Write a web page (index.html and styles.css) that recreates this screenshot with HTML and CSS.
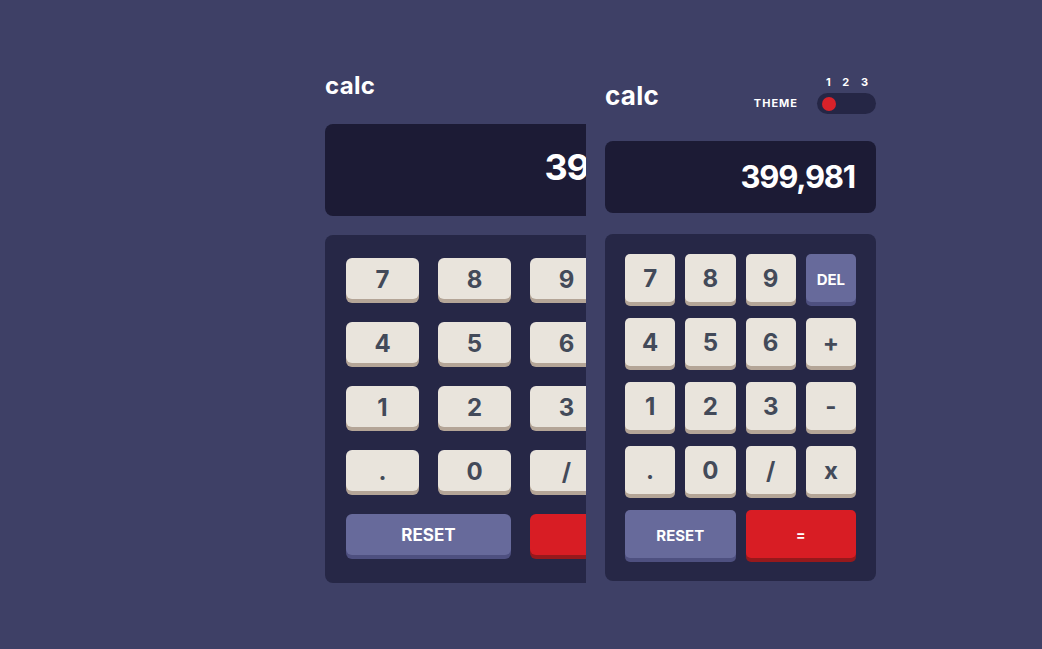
FILE: index.html
```html
<!DOCTYPE html>
<html lang="en">
<head>
<meta charset="utf-8">
<title>calc</title>
<link rel="stylesheet" href="styles.css">
</head>
<body>
<main class="stage">
  <section class="pane pane-left">
    <div class="calc calc-lg">
      <header class="calc-header">
        <h1 class="title">calc</h1>
        <div class="theme">
          <span class="theme-label">THEME</span>
          <div class="theme-switch">
            <div class="theme-nums"><span>1</span><span>2</span><span>3</span></div>
            <div class="toggle"><span class="knob"></span></div>
          </div>
        </div>
      </header>
      <div class="screen">399,981</div>
      <div class="keypad">
        <button class="key">7</button>
        <button class="key">8</button>
        <button class="key">9</button>
        <button class="key key-alt key-small">DEL</button>
        <button class="key">4</button>
        <button class="key">5</button>
        <button class="key">6</button>
        <button class="key">+</button>
        <button class="key">1</button>
        <button class="key">2</button>
        <button class="key">3</button>
        <button class="key">-</button>
        <button class="key">.</button>
        <button class="key">0</button>
        <button class="key">/</button>
        <button class="key">x</button>
        <button class="key key-alt key-wide key-small">RESET</button>
        <button class="key key-eq key-wide key-small">=</button>
      </div>
    </div>
  </section>
  <section class="pane pane-right">
    <div class="calc calc-sm">
      <header class="calc-header">
        <h1 class="title">calc</h1>
        <div class="theme">
          <span class="theme-label">THEME</span>
          <div class="theme-switch">
            <div class="theme-nums"><span>1</span><span>2</span><span>3</span></div>
            <div class="toggle"><span class="knob"></span></div>
          </div>
        </div>
      </header>
      <div class="screen">399,981</div>
      <div class="keypad">
        <button class="key">7</button>
        <button class="key">8</button>
        <button class="key">9</button>
        <button class="key key-alt key-small">DEL</button>
        <button class="key">4</button>
        <button class="key">5</button>
        <button class="key">6</button>
        <button class="key">+</button>
        <button class="key">1</button>
        <button class="key">2</button>
        <button class="key">3</button>
        <button class="key">-</button>
        <button class="key">.</button>
        <button class="key">0</button>
        <button class="key">/</button>
        <button class="key">x</button>
        <button class="key key-alt key-wide key-small">RESET</button>
        <button class="key key-eq key-wide key-small">=</button>
      </div>
    </div>
  </section>
</main>
</body>
</html>
```
FILE: styles.css
```css
* { box-sizing: border-box; }

html, body {
  margin: 0;
  padding: 0;
  background: #3e4066;
}

body {
  font-family: "Inter", "Noto Sans", sans-serif;
  color: #ffffff;
  overflow: hidden;
}

.stage {
  display: flex;
  width: 1042px;
  height: 649px;
}

.pane {
  height: 100%;
  overflow: hidden;
  background: #3e4066;
}

.pane-left {
  width: 586px;
  flex-shrink: 0;
  padding: 70px 0 0 325px;
}

.pane-right {
  flex: 1;
  padding: 74px 0 0 19px;
}

.calc { flex-shrink: 0; }

.calc-lg { width: 391px; }
.calc-sm { width: 271px; }

.calc-header {
  display: flex;
  justify-content: space-between;
  align-items: flex-end;
}

.title {
  margin: 0;
  font-weight: 700;
  line-height: 1;
  letter-spacing: 0.3px;
}

.calc-lg .calc-header { height: 32px; margin-bottom: 22px; }
.calc-lg .title { font-size: 24px; padding-bottom: 4px; }

.calc-sm .calc-header { height: 40px; margin-bottom: 27px; }
.calc-sm .title { font-size: 26px; padding-bottom: 5px; }

.theme {
  display: flex;
  align-items: flex-end;
  gap: 19px;
}

.theme-label {
  font-size: 11px;
  font-weight: 700;
  letter-spacing: 1px;
  line-height: 1;
  padding-bottom: 5px;
}

.theme-switch {
  display: flex;
  flex-direction: column;
  gap: 5px;
}

.theme-nums {
  display: flex;
  justify-content: space-between;
  padding: 0 8px 0 9px;
  font-size: 11px;
  font-weight: 700;
  line-height: 1;
}

.toggle {
  width: 59px;
  height: 21px;
  border-radius: 11px;
  background: #252645;
  display: flex;
  align-items: center;
  padding: 0 5px;
}

.knob {
  width: 14px;
  height: 14px;
  border-radius: 50%;
  background: #d8222a;
}

.screen {
  display: flex;
  align-items: center;
  justify-content: flex-end;
  background: #1c1b35;
  border-radius: 8px;
  font-weight: 700;
  line-height: 1;
}

.calc-lg .screen {
  height: 92px;
  padding: 0 37px 6px 0;
  font-size: 36px;
  letter-spacing: -1.2px;
  margin-bottom: 19px;
}

.calc-sm .screen {
  height: 72px;
  padding: 0 21px 2px 0;
  font-size: 31px;
  letter-spacing: -1.2px;
  margin-bottom: 21px;
}

.keypad {
  display: grid;
  grid-template-columns: repeat(4, 1fr);
  background: #262746;
  border-radius: 8px;
}

.calc-lg .keypad {
  padding: 23px 21px 28px;
  column-gap: 19px;
  row-gap: 23px;
}

.calc-sm .keypad {
  padding: 20px 20px 23px;
  column-gap: 10px;
  row-gap: 16px;
}

.key {
  border: 0;
  margin: 0;
  padding: 2px 0 0;
  font-family: inherit;
  font-weight: 700;
  color: #434a59;
  background: #e9e4dc;
  box-shadow: 0 4px 0 #b4a597;
  display: flex;
  align-items: center;
  justify-content: center;
  line-height: 1;
}

.calc-lg .key {
  height: 41px;
  border-radius: 6px;
  font-size: 24px;
}

.calc-sm .key {
  height: 48px;
  border-radius: 5px;
  font-size: 24px;
}

.key-wide { grid-column: span 2; }

.key-alt {
  background: #676a9b;
  box-shadow: 0 4px 0 #4e5080;
  color: #ffffff;
}

.key-eq {
  background: #d81d24;
  box-shadow: 0 4px 0 #96191c;
  color: #ffffff;
}

.calc-lg .key-small { font-size: 17px; }
.calc-sm .key-small { font-size: 15px; }
.calc-sm .key-eq { font-size: 14px; }
```
